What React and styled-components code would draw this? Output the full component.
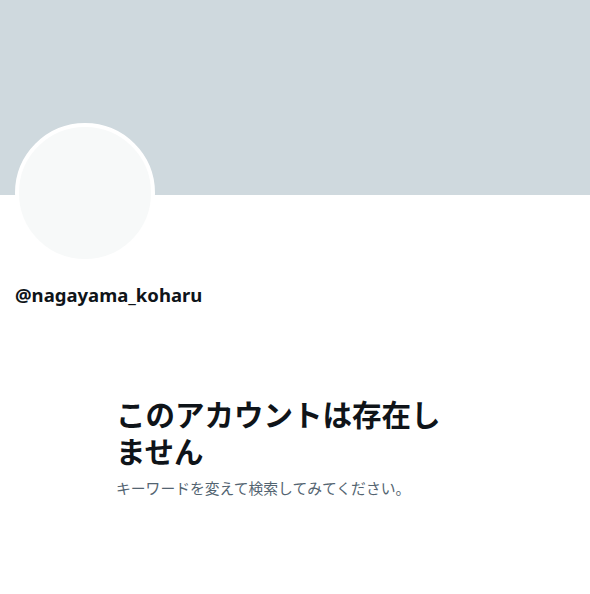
import React from "react";
import styled, { createGlobalStyle } from "styled-components";

const GlobalStyle = createGlobalStyle`
  html, body {
    margin: 0;
    padding: 0;
    background: #ffffff;
    font-family: "Noto Sans", "Noto Sans CJK JP", sans-serif;
  }
`;

const Page = styled.div`
  width: 590px;
  height: 594px;
  background: #ffffff;
  overflow: hidden;
`;

const Banner = styled.div`
  height: 195px;
  background: #cfd9de;
`;

const ProfileHead = styled.div`
  padding: 0 15px;
`;

const Avatar = styled.div`
  width: 132px;
  height: 132px;
  margin-top: -72px;
  border-radius: 50%;
  background: #f7f9f9;
  border: 4px solid #ffffff;
  box-sizing: content-box;
`;

const Handle = styled.div`
  margin-top: 20px;
  font-family: "Noto Sans", "Noto Sans CJK JP", sans-serif;
  font-weight: 700;
  font-size: 18.5px;
  line-height: 24px;
  color: #0f1419;
`;

const Empty = styled.div`
  width: 336px;
  margin: 88px 0 0 116px;
`;

const Title = styled.h1`
  margin: 0;
  font-family: "Noto Sans CJK JP", sans-serif;
  font-weight: 700;
  font-size: 29.5px;
  line-height: 37px;
  color: #0f1419;
`;

const Hint = styled.p`
  margin: 9px 0 0;
  font-family: "Noto Sans CJK JP", sans-serif;
  font-size: 14.8px;
  line-height: 20px;
  color: #536471;
`;

export default function App() {
  return (
    <Page>
      <GlobalStyle />
      <Banner />
      <ProfileHead>
        <Avatar />
        <Handle>@nagayama_koharu</Handle>
      </ProfileHead>
      <Empty>
        <Title>このアカウントは存在しません</Title>
        <Hint>キーワードを変えて検索してみてください。</Hint>
      </Empty>
    </Page>
  );
}
